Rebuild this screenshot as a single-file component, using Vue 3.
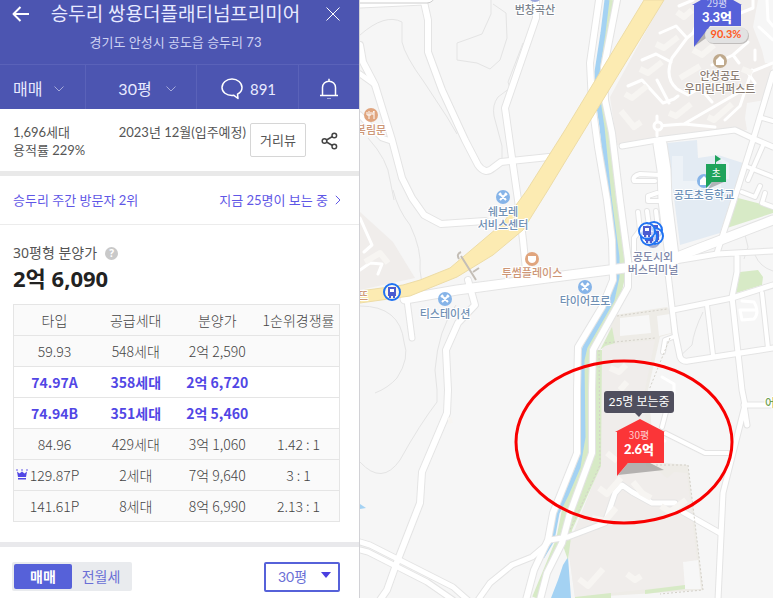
<template>
  <div class="app">
    <aside class="panel">
      <!-- Header -->
      <header class="header">
        <div class="title-row">
          <button class="icon-btn" aria-label="뒤로">
            <svg width="18" height="16" viewBox="0 0 18 16"><path d="M17 8H1.500M8.500 1L1.500 8l7 7" /></svg>
          </button>
          <h1 class="title">승두리 쌍용더플래티넘프리미어</h1>
          <button class="icon-btn" aria-label="닫기">
            <svg width="16" height="16" viewBox="0 0 16 16"><path class="thin" d="M1.500 1.500l13 13M14.500 1.500l-13 13" /></svg>
          </button>
        </div>
        <p class="address">경기도 안성시 공도읍 승두리 73</p>
      </header>

      <nav class="tabs">
        <button class="tab tab-trade">
          매매
          <svg width="10" height="6" viewBox="0 0 10 6"><path class="dim" d="M.5.5L5 5 9.500.5" /></svg>
        </button>
        <button class="tab tab-size">
          30평
          <svg width="10" height="6" viewBox="0 0 10 6"><path class="dim" d="M.5.5L5 5 9.500.5" /></svg>
        </button>
        <button class="tab tab-talk">
          <svg width="22" height="22" viewBox="0 0 22 22">
            <path d="M16.500 16.200C19.300 14.700 21 12.300 21 9.500 21 4.800 16.500 1 11 1S1 4.800 1 9.500 5.500 17.500 11 17.500c.7 0 1.300 0 1.900-.2L17 20.500z" />
          </svg>
          891
        </button>
        <button class="tab tab-alarm" aria-label="알림">
          <svg width="20" height="22" viewBox="0 0 20 22">
            <path d="M1 17.500h18M3.500 17V9.500C3.500 6 6.300 3.200 10 3.200s6.500 2.800 6.500 6.300V17M10 3V.8" />
            <path class="dim" d="M8 20.500h4" />
          </svg>
        </button>
      </nav>

      <!-- Summary -->
      <section class="summary">
        <p class="households">1,696세대<br />용적률 229%</p>
        <p class="move-in">2023년 12월(입주예정)</p>
        <button class="street-btn">거리뷰</button>
        <button class="share-btn" aria-label="공유">
          <svg width="17" height="18" viewBox="0 0 17 18">
            <path d="M5.500 8l6-3.500M5.500 10l6 3.500" />
            <circle cx="3.500" cy="9" r="2.300" />
            <circle cx="13.300" cy="3.500" r="2.300" />
            <circle cx="13.300" cy="14.500" r="2.300" />
          </svg>
        </button>
      </section>

      <section class="visitors">
        <span>승두리 주간 방문자 2위</span>
        <a href="#" class="watching">
          지금 25명이 보는 중
          <svg width="6" height="10" viewBox="0 0 6 10"><path d="M.8.8L5 5 .8 9.200" /></svg>
        </a>
      </section>

      <!-- Price -->
      <section class="price">
        <h2 class="price-label">
          30평형 분양가
          <span class="help">?</span>
        </h2>
        <p class="price-value">2억 6,090</p>
        <table class="price-table">
          <thead>
            <tr>
              <th>타입</th>
              <th>공급세대</th>
              <th>분양가</th>
              <th>1순위경쟁률</th>
            </tr>
          </thead>
          <tbody>
            <tr v-for="row in rows" :key="row.type" :class="{ active: row.active }">
              <td>
                <svg v-if="row.crown" class="crown" width="12" height="11" viewBox="0 0 12 11">
                  <path d="M1 2.500L3.500 4.500 6 2.500l2.500 2L11 2.500 10 8H2zM2 9h8v1.500H2z" />
                  <circle cx="1" cy="1" r=".8" />
                  <circle cx="6" cy="1" r=".8" />
                  <circle cx="11" cy="1" r=".8" />
                </svg>
                {{ row.type }}
              </td>
              <td>{{ row.count }}</td>
              <td>{{ row.price }}</td>
              <td>{{ row.rate }}</td>
            </tr>
          </tbody>
        </table>
      </section>

      <!-- Filters -->
      <section class="filters">
        <div class="toggle">
          <button
            v-for="name in trades"
            :key="name"
            :class="{ on: trade === name }"
            @click="trade = name"
          >
            {{ name }}
          </button>
        </div>
        <div class="size-select">
          <select v-model="size" aria-label="평형">
            <option>30평</option>
            <option>34평</option>
          </select>
          <svg width="10" height="6" viewBox="0 0 10 6"><path d="M0 0h10L5 6z" /></svg>
        </div>
      </section>
    </aside>

    <main class="map">
      <svg class="map-canvas" viewBox="360 0 413 598" preserveAspectRatio="xMinYMin slice">
        <!-- Areas -->
        <path class="estate" d="M663 0H758L753 27 762 50 765 63H773L765 100 747 103 745 118 747 130 617 145 610 97z" />
        <path class="estate" d="M360 212L393 242 415 278 360 290z" />
        <path class="path-area" d="M615 315L667 307 672 312 673 333 660 337 648 390 655 462 688 465 703 590 575 598 568 547 600 467 602 350z" />
        <path class="estate" d="M605 345L655 340 645 390 646 466 660 472 667 478 674 472 687 473 697 560 683 562 685 585 575 597 568 547 600 467 602 350z" />
        <path class="ground" d="M620 318L649 315 651 333 620 336zM657 316L670 314 671 333 659 336z" />
        <path class="ground" d="M683 562L698 560 701 589 685 589z" />
        <path class="school" d="M667 143L697 140 698 158 718 155 743 163 720 233 680 245z" />
        <path class="school-block" d="M672 156h11v25h38v8h-49zM715 155l14 8v16h-7v-16z" />
        <path class="green" d="M738 198L773 207V213L727 228zM740 272L758 270 763 277 762 285 736 293z" />
        <path class="green" d="M645 590L685 585V589L645 594zM575 597L611 593V598H575zM600 350L612 327 615 343 605 346z" />
        <path class="water" d="M551 598L558 580 563 565 568 557 571 598zM360 504L366 508 360 509z" />

        <!-- Contours -->
        <g class="contour">
          <path d="M491 0V14L482 34 471 38 457 43 457 60 477 63 490 69 500 60 507 38 506 13 493 4" />
          <path d="M360 35Q385 13 402 22L402 42Q405 56 424 82L447 117 457 134" />
          <path d="M523 43L508 82 510 88 498 97Q492 105 494 116L502 146V160" />
          <path d="M393 190Q398 210 410 225 422 250 420 270L424 298" />
          <path d="M368 138Q388 160 390 180L394 200M360 306Q400 306 404 342 410 358 397 378 388 388 375 393" />
          <path d="M456 305Q438 330 435 370L437 390V402Q420 424 400 460 382 486 360 462" />
          <path d="M703 312Q694 330 692 345L678 358M745 235l3 12-4 12M755 255q5 12 18 16" />
        </g>

        <!-- River -->
        <path class="bank" d="M611 0L606 33 600 72 602 100 606 127 612 197 621 257 621 277 616 300 590 347 588 360 588 437 584 467 568 500 560 540 536 598" />
        <path class="river" d="M607 0L603 33 597 72 598 100 602 127 609 197 617 257 617 277 612 300 585 347 582 360 583 437 578 467 566 495 557 513 552 540 542 557" />
        <path class="green" d="M594 350H602L601 466 572 530 568 560 562 543 572 510 594 458z" />

        <!-- Roads -->
        <g v-for="layer in ['casing', 'road']" :key="layer" :class="layer">
          <path class="w7" d="M424 2L428 20V52L442 90 465 140 478 165Q485 175 493 168L501 162 549 157" />
          <path class="w7" d="M536 0V18L505 108 513 165 518 200 523 240 526 270" />
          <path class="w7" d="M360 45L363 62 375 85 392 140 402 178 412 198 424 215 441 224 485 221" />
          <path class="w5" d="M360 74L374 84M360 115L372 128 382 138 391 141M360 5L424 2" />
          <path class="w7" d="M468 280L475 305 458 323 446 350 448 390 447 413 422 472 420 503 397 562 387 590 380 600" />
          <path class="w5" d="M407 300L412 338" />
          <path class="w5" d="M360 542L370 545 453 587 470 602M360 550L368 552 427 582 453 600" />
          <path class="w5" d="M478 600L490 583 512 565 532 557 545 546 550 540 568 537 605 523 615 493 622 485 632 492 652 503 675 503M683 512L720 533" />
          <path class="w7" d="M599 0L590 63 592 103 598 147 607 200 612 240 613 280 602 307 578 347 577 390 577 453 553 513 548 540 534 570 526 600" />
          <path class="w7" d="M617 0L604 67 605 100 612 133 620 200 628 260 628 287 593 350 592 390 592 453 570 513 562 543 547 573 540 600" />
          <path class="w11" d="M405 299L457 290 480 287 570 275 625 268 672 261" />
          <path class="w11" d="M672 259L700 248 773 220" />
          <path class="w5" d="M675 261L717 254 773 251M737 257V272L732 297 742 390 745 405 723 493 718 600M745 405H773M744 405L747 425" />
          <path class="w5" d="M622 146L657 140 735 130 752 138 773 147M773 73L753 140 735 197 717 253" />
          <path class="w15" d="M660 144L664 170 665 200 672 256" />
          <path class="w5" d="M667 265L675 333 680 357Q682 362 688 361L773 348M673 310L732 298 773 285" />
          <path class="w4" d="M707 305L713 355M762 293L768 348M665 433L705 453H728M667 408L662 427M673 337L665 340 663 352M762 118L773 121M748 167L773 177M764 143L748 180M742 192L755 197 760 186M765 193L762 203 773 207M660 175L640 174Q632 176 634 181L655 181M657 193L648 196V201H660" />
          <path class="w4" d="M638 212L640 230M647 211L649 226M656 211L658 228M640 230L634 238 634 260" />
        </g>
        <path class="highway" d="M644 0L565 130 527 190 503 223 483 240 450 268 420 280 403 285 360 291V303L410 296 457 277 493 255 523 230 548 190 565 162 664 0z" />

        <g class="lane">
          <path d="M660 33L676 26 687 38 693 33 700 15M687 38L672 58Q664 78 677 89L688 95 700 88 712 102M642 60L656 54 671 62M628 86L642 80 663 103 674 99 678 96M657 80L669 103M684 124L755 83 748 73 773 63M712 65L733 55 748 42M733 55L739 63M755 50V60M725 120L740 106 752 70M657 126L684 124 715 127M657 116V136M679 6L693 0" />
          <path d="M738 14L753 8V0M767 0L768 20 773 26M759 27L773 40" />
          <path d="M360 218L372 245 364 252M360 270L370 263 382 264 378 274M742 301L754 302Q760 312 754 319L742 320 740 310 756 310" />
          <path d="M662 377L674 384 674 393M658 438L665 441" />
        </g>
        <circle class="lane-ring" cx="658" cy="126" r="4" />
        <g class="block">
          <path d="M656 44L664 48 678 37M640 69L648 73 662 62M625 94L632 98 647 86M621 111L634 127 641 122M669 113L676 116 691 104M708 117L714 120 732 104M680 78L700 66M693 50L702 55 714 45M742 69L752 73M677 12L684 17 692 10" />
          <path d="M599 488L607 494 621 478M607 453L617 461M633 482L642 493 651 498M592 518L605 521 616 508M661 506L670 512 686 500M579 579L588 586 603 569M627 574L635 580 641 576M610 368L619 372 626 365M620 390L627 382M365 262L380 253 388 263M448 421L452 420" />
        </g>
        <path class="trail" d="M617 316L667 309M605 343L655 338M670 338L649 390M656 465L688 465 703 590 660 594M599 350L600 465 570 530" />
        <path class="bridge" d="M459 259q-3-5 2-7M461 256l15 24M473 272l6-4" />

        <!-- Places -->
        <g v-for="place in places" :key="place.lines[0]" :class="['place', place.kind]">
          <template v-if="place.icon">
            <circle :cx="place.x" :cy="place.icon" r="7" />
            <g :transform="`translate(${place.x} ${place.icon})`">
              <path v-if="place.kind === 'shop'" class="glyph" d="M-3 -3L3 3M3 -3L-3 3M-4 -2l2-2M2 -4l2 2" />
              <path v-else-if="place.kind === 'food'" class="glyph" d="M-2 -4v8M-4 -3v3h4v-3M3 4v-8q-2 2-1 4" />
              <path v-else-if="place.kind === 'cafe'" class="solid" d="M-4 -3h8v4q-1 3-4 3t-4-3z" />
              <path v-else class="solid" d="M0 -5L4 -1V4H-4V-1z" />
            </g>
          </template>
          <text
            v-for="(line, i) in place.lines"
            :key="line"
            :x="place.x"
            :y="place.y + i * 13"
          >{{ line }}</text>
        </g>

        <!-- Bus stops -->
        <g v-for="stop in stops" :key="stop.x" class="stop" :transform="`translate(${stop.x} ${stop.y})`">
          <circle r="8" />
          <path d="M-4 -5h8v9h-1v2h-2v-2h-2v2h-2v-2h-1z" />
          <path class="window" d="M-2 -3h4v3h-4z" />
        </g>

        <!-- School marker -->
        <g class="school-pin">
          <path class="shade" d="M708 189L724 182H712z" />
          <path d="M706 164H715V155L721 159 716 162V164H726V182H712L706 188z" />
          <text x="716" y="177">초</text>
        </g>

        <!-- Price pins -->
        <g class="pin pin-blue">
          <path class="shade" d="M695 46L720 28H704z" />
          <path d="M692 5L717 -9 742 5H741V26H710L694 47V5z" />
          <text class="pin-size" x="717" y="7">29평</text>
          <text class="pin-price" x="717" y="22">3.3억</text>
          <rect class="badge-shade" x="706" y="28" width="43" height="16" rx="8" />
          <rect class="badge" x="705" y="27" width="43" height="16" rx="8" />
          <text class="badge-text" x="726" y="38">90.3%</text>
        </g>
        <g class="pin pin-red">
          <path class="shade" d="M618 475L664 470 650 463H628z" />
          <path d="M615 432L640 419 665 432H664V463H628L617 476V432z" />
          <text class="pin-size" x="639" y="439">30평</text>
          <text class="pin-price" x="639" y="454">2.6억</text>
          <rect class="tip" x="604" y="391" width="70" height="22" rx="3" />
          <path class="tip" d="M634 412h9l-4 5z" />
          <text class="tip-text" x="639" y="406">25명 보는중</text>
        </g>
        <ellipse class="mark" cx="624" cy="442" rx="108" ry="81" />
        <rect class="search-edge" x="340" y="-20" width="95" height="23" rx="8" />
      </svg>
    </main>
  </div>
</template>

<script setup>
import { ref } from 'vue'

const trades = ['매매', '전월세']
const trade = ref('매매')
const size = ref('30평')

const rows = [
  { type: '59.93', count: '548세대', price: '2억 2,590', rate: '' },
  { type: '74.97A', count: '358세대', price: '2억 6,720', rate: '', active: true },
  { type: '74.94B', count: '351세대', price: '2억 5,460', rate: '', active: true },
  { type: '84.96', count: '429세대', price: '3억 1,060', rate: '1.42 : 1' },
  { type: '129.87P', count: '2세대', price: '7억 9,640', rate: '3 : 1', crown: true },
  { type: '141.61P', count: '8세대', price: '8억 6,990', rate: '2.13 : 1' }
]

// x: label centre, y: first baseline, icon: icon centre y
const places = [
  { kind: 'hill', x: 535, y: 14, icon: -5, lines: ['번창곡산'] },
  { kind: 'food', x: 371, y: 134, icon: 115, lines: ['복림문'] },
  { kind: 'shop', x: 503, y: 216, icon: 197, lines: ['쉐보레', '서비스센터'] },
  { kind: 'cafe', x: 532, y: 277, icon: 259, lines: ['투썸플레이스'] },
  { kind: 'shop', x: 445, y: 318, icon: 299, lines: ['티스테이션'] },
  { kind: 'shop', x: 585, y: 305, icon: 287, lines: ['타이어프로'] },
  { kind: 'home', x: 720, y: 80, icon: 61, lines: ['안성공도', '우미린더퍼스트'] },
  { kind: 'edu', x: 704, y: 199, icon: 181, lines: ['공도초등학교'] },
  { kind: 'bus', x: 653, y: 261, icon: 241, lines: ['공도시외', '버스터미널'] },
  { kind: 'food', x: 363, y: 300, lines: ['뜨'] },
  { kind: 'park', x: 770, y: 407, lines: ['어'] }
]

const stops = [
  { x: 392, y: 292 },
  { x: 654, y: 230 },
  { x: 655, y: 236 },
  { x: 649, y: 237 },
  { x: 647, y: 231 }
]
</script>

<style>
body {
  margin: 0;
}
</style>

<style scoped>
.app {
  display: flex;
  height: 100vh;
  overflow: hidden;
  font-family: Lato, "Noto Sans CJK KR", sans-serif;
  font-size: 13px;
  line-height: 18px;
  color: #555;
}

h1,
h2,
p {
  margin: 0;
  font-weight: 400;
}

button,
select {
  padding: 0;
  border: 0;
  background: none;
  font: inherit;
  color: inherit;
  cursor: pointer;
}

svg {
  flex-shrink: 0;
}

path,
circle {
  stroke-linejoin: round;
}

.panel {
  flex: 0 0 360px;
  box-sizing: border-box;
  border-right: 1px solid #d2d2d6;
  background: #fff;
  overflow: hidden;
}

.header {
  height: 64px;
  background: #4c55b1;
  color: #fff;
  text-align: center;
}

.title-row {
  display: flex;
  align-items: center;
  justify-content: space-between;
  height: 28px;
  padding: 0 18px 0 12px;
}

.title {
  padding-right: 4px;
  font-size: 19px;
  line-height: 28px;
  color: #e8eaff;
}

.icon-btn {
  display: flex;
}

.icon-btn path,
.tab path {
  fill: none;
  stroke: #fff;
  stroke-width: 2;
}

.icon-btn .thin {
  stroke-width: 1;
}

.address {
  padding: 4px 8px 0 0;
  line-height: 20px;
  color: #ced2f3;
}

.tabs {
  display: grid;
  grid-template-columns: 85fr 111fr 102fr 61fr;
  height: 45px;
  background: #4c55b1;
  border-top: 1px solid #5a62b9;
  box-sizing: border-box;
}

.tab {
  display: flex;
  align-items: center;
  justify-content: center;
  gap: 14px;
  padding-top: 4px;
  font-size: 16px;
  color: #e8eaff;
}

.tab + .tab {
  border-left: 1px solid #5a62b9;
}

.tab-trade {
  justify-content: flex-start;
  gap: 12px;
  padding-left: 13px;
}

.tab-size {
  padding-left: 12px;
}

.tab-talk {
  gap: 7px;
  padding-left: 2px;
  font-size: 15px;
}

.tab path {
  stroke-width: 1.5;
}

.tab .dim {
  stroke: #a5aadb;
  stroke-width: 1;
}

.summary {
  display: flex;
  align-items: flex-start;
  height: 62px;
  box-sizing: border-box;
  padding: 14px 21px 0 13px;
}

.households {
  flex: 1;
}

.move-in {
  margin-right: 4px;
}

.street-btn {
  width: 56px;
  height: 34px;
  border: 1px solid #d6d6d6;
  border-radius: 2px;
}

.share-btn {
  display: flex;
  margin: 9px 0 0 15px;
}

.share-btn svg {
  fill: none;
  stroke: #444;
  stroke-width: 1.5;
}

.visitors {
  display: flex;
  align-items: center;
  justify-content: space-between;
  height: 53px;
  box-sizing: border-box;
  padding: 0 18px 0 13px;
  border-top: 5px solid #e9e9e9;
  color: #5f57e6;
}

.watching {
  display: flex;
  align-items: center;
  gap: 7px;
  color: inherit;
  text-decoration: none;
}

.watching path {
  fill: none;
  stroke: #5f57e6;
}

.price {
  padding: 18px 19px 20px 13px;
  border-top: 1px solid #ececec;
  border-bottom: 5px solid #e9e9ec;
  font-family: "Noto Sans", "Noto Sans CJK KR", sans-serif;
}

.price-label {
  display: flex;
  align-items: center;
  gap: 8px;
  font-size: 14px;
  line-height: 20px;
}

.help {
  width: 13px;
  height: 13px;
  border-radius: 50%;
  background: #c9c9c9;
  color: #fff;
  font-size: 10px;
  font-weight: 700;
  line-height: 13px;
  text-align: center;
}

.price-value {
  margin-bottom: 11px;
  font-size: 22px;
  font-weight: 700;
  line-height: 30px;
  color: #222;
}

.price-table {
  width: 100%;
  table-layout: fixed;
  border-collapse: collapse;
  border: 1px solid #e5e5e5;
  background: #fafafa;
  font-size: 14px;
  font-family: "Noto Sans CJK KR", sans-serif;
  font-weight: 300;
  line-height: 20px;
  color: #444;
}

.price-table tr {
  height: 31px;
  border-bottom: 1px solid #e5e5e5;
}

.price-table th,
.price-table td {
  position: relative;
  padding: 0;
  font-weight: inherit;
  text-align: center;
  white-space: nowrap;
}

.price-table .active {
  background: #fff;
  color: #5146e5;
  font-weight: 700;
}

.crown {
  position: absolute;
  left: 2px;
  top: 9px;
  fill: #5146e5;
}

.filters {
  display: flex;
  align-items: flex-start;
  justify-content: space-between;
  padding: 15px 19px 15px 12px;
  font-size: 14px;
  color: #6a6fd6;
}

.toggle {
  display: flex;
  padding: 2px;
  background: #e9ebee;
  border-radius: 2px;
}

.toggle button {
  width: 58px;
  height: 25px;
  border-radius: 2px;
}

.toggle .on {
  background: #5661d9;
  color: #fff;
  font-weight: 700;
}

.size-select {
  position: relative;
}

.size-select select {
  width: 76px;
  height: 30px;
  padding-left: 12px;
  border: 2px solid #5661d9;
  border-radius: 2px;
  appearance: none;
}

.size-select svg {
  position: absolute;
  right: 9px;
  top: 10px;
  fill: #4a3fe0;
  pointer-events: none;
}

/* Map */
.map {
  flex: 1;
  min-width: 0;
  background: #f6f6f6;
}

.map-canvas {
  display: block;
  width: 100%;
  height: 100%;
  font-family: "Noto Sans CJK KR", sans-serif;
}

.map-canvas text {
  text-anchor: middle;
}

.estate {
  fill: #f0edeb;
}

.path-area {
  fill: #eeece7;
}

.ground {
  fill: #f7f7f7;
}

.school {
  fill: #e3ebf3;
}

.school-block {
  fill: #edf2f7;
}

.green {
  fill: #d7eac6;
}

.water {
  fill: #a4d2f3;
}

.contour {
  fill: none;
  stroke: #e4e4e4;
}

.bank {
  fill: none;
  stroke: #d7eac6;
  stroke-width: 8;
}

.river {
  fill: none;
  stroke: #a4d2f3;
  stroke-width: 5;
}

.casing,
.road {
  fill: none;
  stroke: #fff;
  stroke-linecap: round;
}

.w4 { stroke-width: 4; }
.w5 { stroke-width: 5; }
.w7 { stroke-width: 6; }
.w11 { stroke-width: 9; }
.w15 { stroke-width: 13; }

.casing { stroke: #e4e4e4; }
.casing .w4 { stroke-width: 6; }
.casing .w5 { stroke-width: 7; }
.casing .w7 { stroke-width: 8; }
.casing .w11 { stroke-width: 11; }
.casing .w15 { stroke-width: 15; }

.highway {
  fill: #fcebb2;
  stroke: #eddca6;
}

.lane {
  fill: none;
  stroke: #fff;
  stroke-width: 3;
  stroke-linecap: round;
}

.lane-ring {
  fill: #f0edeb;
  stroke: #fff;
  stroke-width: 3;
}

.block {
  fill: none;
  stroke: #f7f5f2;
  stroke-width: 6;
}

.trail {
  fill: none;
  stroke: #d3d0c8;
  stroke-dasharray: 2 2;
}

.bridge {
  fill: none;
  stroke: #c4beb6;
  stroke-width: 2;
}

.place text {
  font-size: 11px;
  font-weight: 500;
  paint-order: stroke;
  stroke: #fff;
  stroke-width: 2px;
}

.place .glyph {
  fill: none;
  stroke: #fff;
  stroke-width: 2;
}

.place .solid {
  fill: #fff;
}

.hill { fill: #7b828c; }
.hill circle { fill: #9aa5dc; }
.food { fill: #cd9676; }
.food circle,
.cafe circle { fill: #e0a57e; }
.place.food .glyph { stroke-width: 1; }
.cafe { fill: #cd9676; }
.shop { fill: #7090b4; }
.shop circle { fill: #86b4e8; }
.home { fill: #8a7d73; }
.home circle { fill: #bfa98c; }
.edu { fill: #6b8fb8; }
.edu circle { fill: #86b4e8; }
.bus { fill: #7d86a8; }
.bus circle { fill: #a3acd0; }
.park { fill: #6fa153; }

.stop circle {
  fill: #fff;
  fill-opacity: 0.7;
  stroke: #1f72f2;
  stroke-width: 2;
}

.stop path {
  fill: #4b5cd0;
}

.stop .window {
  fill: #fff;
}

.shade {
  fill: #000;
  fill-opacity: 0.25;
}

.school-pin {
  fill: #1fa35c;
}

.school-pin text {
  fill: #fff;
  font-size: 10px;
}

.pin-blue {
  fill: #5661d9;
}

.pin-red {
  fill: #fb3538;
}

.pin .pin-size {
  fill: #fff;
  fill-opacity: 0.75;
  font-size: 10px;
}

.pin .pin-price {
  fill: #fff;
  font-family: Lato, "Noto Sans CJK KR", sans-serif;
  font-size: 13px;
  font-weight: 900;
}

.pin .badge-shade {
  fill: #000;
  fill-opacity: 0.2;
}

.pin .badge {
  fill: #e2e2e2;
}

.pin .badge-text {
  fill: #ff5a1e;
  font-family: Lato, sans-serif;
  font-size: 11px;
  font-weight: 700;
}

.pin .tip {
  fill: #504f5e;
}

.pin .tip-text {
  fill: #fff;
  font-family: Lato, "Noto Sans CJK KR", sans-serif;
  font-size: 12px;
}

.mark {
  fill: none;
  stroke: #f80000;
  stroke-width: 3;
}

.search-edge {
  fill: #fff;
  stroke: #ccc;
}
</style>
